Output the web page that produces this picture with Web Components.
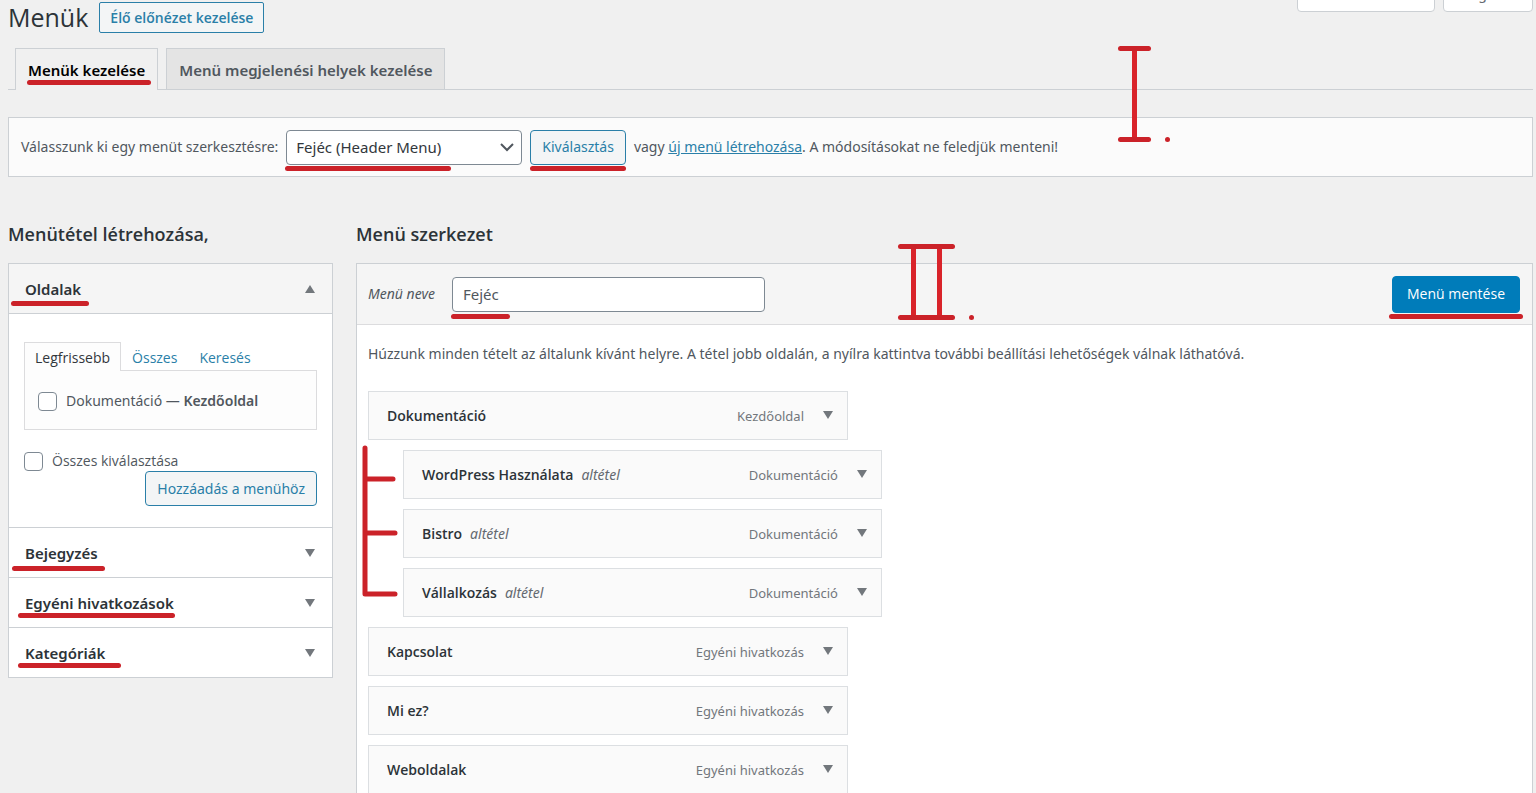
<!DOCTYPE html>
<html lang="hu">
<head>
<meta charset="utf-8">
<meta name="viewport" content="width=device-width, initial-scale=1">
<title>Menük</title>
<style>
  html, body { margin: 0; height: 100%; }
  body { overflow: hidden; background: #f0f0f0; color: #50575e;
    font: 14px/20px "Noto Sans", "Open Sans", sans-serif;
    --compact: "Open Sans", "Noto Sans", sans-serif;
    --line: #ccd0d4; --blue: #2a7fa8; --ink: #cb2229; --dark: #2c3338; }
</style>
</head>
<body>
<menus-page></menus-page>

<script>
const define = (name, html, setup) => {
  const template = document.createElement('template');
  template.innerHTML = '<style>*{box-sizing:border-box}</style>' + html;
  customElements.define(name, class extends HTMLElement {
    constructor() {
      super();
      this.attachShadow({ mode: 'open' }).append(template.content.cloneNode(true));
    }
    connectedCallback() { if (setup) setup(this, this.shadowRoot); }
  });
};

/* Red marker stroke laid under the thing that holds it */
define('ink-line', `
  <style>:host { position: absolute; left: var(--from, 0px); right: var(--to, 0px); top: var(--at, 100%);
    height: 5px; border-radius: 3px; background: var(--ink); pointer-events: none; }</style>`);

/* Marker numeral: bars above and below, one stem for each count, and a dot */
define('ink-numeral', `
  <style>
    :host { position: absolute; display: flex; align-items: flex-end; gap: 14px; pointer-events: none; z-index: 2; }
    .body { display: flex; justify-content: center; gap: 21px; height: var(--tall); width: var(--wide);
      position: relative; }
    .body::before, .body::after { content: ""; position: absolute; left: 0; right: 0; height: 5px;
      border-radius: 3px; background: var(--ink); }
    .body::before { top: 0; } .body::after { bottom: 0; }
    i { width: 5px; background: #d9232a; }
    b { width: 5px; height: 5px; border-radius: 50%; background: var(--ink); }
  </style><div class="body"></div><b></b>`,
  (host, root) => {
    root.querySelector('.body').innerHTML = '<i></i>'.repeat(Number(host.getAttribute('count')));
  });

/* Marker bracket that joins the sub-items */
define('ink-bracket', `
  <style>
    :host { position: absolute; left: -6px; top: -5px; pointer-events: none; }
    svg { display: block; stroke: var(--ink); stroke-width: 5; fill: none; stroke-linecap: round; stroke-linejoin: round; }
  </style>
  <svg width="38" height="154"><path d="M3 3V149H33M3 34H31M3 88H33"/></svg>`);

define('wp-button', `
  <style>
    :host { display: block; position: relative; }
    button { display: block; width: 100%; font: inherit; color: var(--blue); background: #f3f5f6; border: 1px solid var(--blue);
      border-radius: 4px; height: 35px; padding: 0 11px; white-space: nowrap; }
    :host([kind=title]) button { height: 31px; padding: 0 10px; border-radius: 2px; font-family: var(--compact); font-weight: 600; }
    :host([kind=primary]) button { background: #007cba; border-color: #007cba; color: #fff; height: 37px; padding: 0 14px; font-family: var(--compact); }
  </style><button type="button"><slot></slot></button><slot name="ink"></slot>`);

define('screen-links', `
  <style>
    :host { position: absolute; top: -24px; right: 3px; display: flex; gap: 8px; }
    button { height: 36px; border: 1px solid var(--line); border-radius: 0 0 4px 4px; background: #fff;
      font: inherit; color: #646970; text-align: left; padding: 0 18px; }
    .options { width: 138px; } .help { width: 90px; line-height: 34px; }
  </style>
  <button type="button" class="options" aria-label="Beállítások"></button>
  <button type="button" class="help">Súgó</button>`);

define('page-tabs', `
  <style>
    :host { display: block; }
    nav { display: flex; gap: 8px; padding-left: 7px; border-bottom: 1px solid var(--line); height: 42px; }
    a { position: relative; height: 41px; border: 1px solid var(--line); border-bottom: 0; background: #e4e4e4;
      color: #50575e; font-size: 15px; font-weight: 600; line-height: 42px; padding: 0 12px; text-decoration: none; white-space: nowrap; }
    a.on { height: 42px; background: #f0f0f0; color: #000; }
  </style>
  <nav><a class="on" href="#manage">Menük kezelése<ink-line style="--from:11px;--to:6px;--at:31px"></ink-line></a>
  <a href="#locations">Menü megjelenési helyek kezelése</a></nav>`);

define('menu-picker', `
  <style>
    :host { display: block; }
    form { display: flex; align-items: center; height: 60px; padding: 0 12px; background: #fbfbfb;
      border: 1px solid var(--line); white-space: nowrap; }
    .pick { position: relative; margin: 0 8px; width: 236px; }
    select { appearance: none; display: block; width: 100%; height: 35px; border: 1px solid #7e8993; border-radius: 4px;
      background: #fff; color: #32373c; font: inherit; font-size: 15px; padding: 0 9px; }
    svg { position: absolute; right: 8px; top: 10px; pointer-events: none; }
    p { margin: 0 0 0 8px; }
    a { color: var(--blue); }
  </style>
  <form>
    <label for="menu">Válasszunk ki egy menüt szerkesztésre:</label>
    <span class="pick"><select id="menu"><option>Fejéc (Header Menu)</option></select>
      <svg width="14" height="14" viewBox="0 0 14 14"><path d="M1 4l6 6 6-6" fill="none" stroke="#50575e" stroke-width="2"/></svg>
      <ink-line style="--from:-1px;--to:71px;--at:36px"></ink-line></span>
    <wp-button>Kiválasztás<ink-line slot="ink" style="--at:36px"></ink-line></wp-button>
    <p>vagy <a href="#new">új menü létrehozása</a>. A módosításokat ne feledjük menteni!</p>
  </form>`);

/* One section of the accordion */
define('acc-section', `
  <style>
    :host { display: block; }
    h3 { margin: 0; }
    button { display: flex; justify-content: space-between; align-items: center; width: 100%; height: 49px; border: 0;
      background: #fff; padding: 0 17px 0 16px; font: inherit; font-size: 15px; font-weight: 600; color: var(--dark); text-align: left; }
    :host([open]) button { background: #f5f5f5; }
    .arrow { width: 0; border: 5px solid transparent; border-top: 8px solid #72777c; border-bottom: 0; }
    :host([open]) .arrow { border-top: 0; border-bottom: 8px solid #72777c; }
    .content { display: none; }
    :host([open]) .content { display: block; padding: 28px 15px 21px; border-top: 1px solid var(--line); }
    .head { position: relative; }
  </style>
  <h3 class="head"><button type="button"><span class="label"></span><span class="arrow"></span></button><slot name="ink"></slot></h3>
  <div class="content"><slot></slot></div>`,
  (host, root) => {
    root.querySelector('.label').textContent = host.getAttribute('label');
    root.querySelector('button').setAttribute('aria-expanded', host.hasAttribute('open'));
  });

define('page-chooser', `
  <style>
    :host { display: block; }
    nav { display: flex; height: 29px; margin-bottom: -1px; position: relative; line-height: 32px; font-family: var(--compact); }
    a { padding: 0 11px; color: var(--blue); text-decoration: none; }
    a.on { border: 1px solid #dcdcde; border-bottom: 0; background: #fdfdfd; color: #32373c; padding: 0 10px; line-height: 30px; }
    .list { border: 1px solid #dcdcde; background: #fdfdfd; padding: 20px 13px 18px; }
    label { display: flex; align-items: center; gap: 9px; height: 20px; white-space: pre; }
    input { appearance: none; width: 19px; height: 19px; margin: 0; border: 1px solid #7e8993; border-radius: 4px; background: #fff; }
    .all { margin-top: 21px; font-family: var(--compact); }
    .actions { display: flex; justify-content: flex-end; }
    b { font-weight: 600; }
  </style>
  <nav><a class="on" href="#recent">Legfrissebb</a><a href="#all">Összes</a><a href="#search">Keresés</a></nav>
  <div class="list"><label><input type="checkbox"><span>Dokumentáció — <b>Kezdőoldal</b></span></label></div>
  <label class="all"><input type="checkbox"><span>Összes kiválasztása</span></label>
  <div class="actions"><wp-button>Hozzáadás a menühöz</wp-button></div>`);

define('item-accordion', `
  <style>
    :host { display: block; border: 1px solid var(--line); background: #fff; }
    acc-section + acc-section { border-top: 1px solid var(--line); }
  </style>
  <acc-section label="Oldalak" open><page-chooser></page-chooser>
    <ink-line slot="ink" style="--from:2px;--to:243px;--at:37px"></ink-line></acc-section>
  <acc-section label="Bejegyzés"><ink-line slot="ink" style="--from:3px;--to:227px;--at:38px"></ink-line></acc-section>
  <acc-section label="Egyéni hivatkozások"><ink-line slot="ink" style="--from:9px;--to:157px;--at:35px"></ink-line></acc-section>
  <acc-section label="Kategóriák"><ink-line slot="ink" style="--from:9px;--to:211px;--at:35px"></ink-line></acc-section>`);

define('menu-item', `
  <style>
    :host { display: flex; align-items: center; width: 480px; height: 49px; border: 1px solid #dcdfe2; background: #fafafa;
      padding: 0 13px 0 18px; white-space: pre; }
    :host([sub]) { margin-left: 35px; width: 479px; }
    strong { font-weight: 600; color: var(--dark); font-family: var(--compact); }
    em { margin-left: 8px; color: #646970; }
    .kind { margin-left: auto; color: #72777c; font-size: 13px; }
    button { border: 0; background: none; padding: 0; margin-left: 18px; display: flex; }
    svg { display: block; }
  </style>
  <strong><slot></slot></strong><em></em><span class="kind"></span>
  <button type="button" aria-label="Szerkesztés"><svg width="12" height="10"><path d="M1 0h10L6 8z" fill="#72777c"/></svg></button>`,
  (host, root) => {
    root.querySelector('em').textContent = host.hasAttribute('sub') ? 'altétel' : '';
    root.querySelector('.kind').textContent = host.getAttribute('kind');
  });

define('menu-structure', `
  <style>
    :host { display: block; border: 1px solid var(--line); background: #fff; }
    header { position: relative; display: flex; align-items: center; height: 61px; padding: 0 12px 0 11px; background: #f5f5f5; border-bottom: 1px solid #dcdcde; }
    label { font-style: italic; }
    .field { position: relative; width: 313px; margin: 0 auto 0 17px; }
    input { display: block; width: 100%; height: 35px; border: 1px solid #7e8993; border-radius: 4px; background: #fff;
      font: inherit; font-size: 15px; color: #50575e; padding: 0 10px; }
    ink-numeral { left: 541px; top: -20px; }
    p { margin: 0; padding: 19px 11px 27px; }
    .items { display: flex; flex-direction: column; gap: 10px; padding: 0 11px; }
    .subs { position: relative; display: flex; flex-direction: column; gap: 10px; }
  </style>
  <header>
    <label for="name">Menü neve</label>
    <span class="field"><input id="name" type="text" value="Fejéc"><ink-line style="--from:-1px;--to:255px;--at:37px"></ink-line></span>
    <wp-button kind="primary">Menü mentése<ink-line slot="ink" style="--from:-3px;--to:-3px;--at:38px"></ink-line></wp-button>
    <ink-numeral count="2" role="img" aria-label="II." style="--wide:57px;--tall:76px"></ink-numeral>
  </header>
  <p>Húzzunk minden tételt az általunk kívánt helyre. A tétel jobb oldalán, a nyílra kattintva további beállítási lehetőségek válnak láthatóvá.</p>
  <div class="items">
    <menu-item kind="Kezdőoldal">Dokumentáció</menu-item>
    <div class="subs">
      <menu-item sub kind="Dokumentáció">WordPress Használata</menu-item>
      <menu-item sub kind="Dokumentáció">Bistro</menu-item>
      <menu-item sub kind="Dokumentáció">Vállalkozás</menu-item>
      <ink-bracket></ink-bracket>
    </div>
    <menu-item kind="Egyéni hivatkozás">Kapcsolat</menu-item>
    <menu-item kind="Egyéni hivatkozás">Mi ez?</menu-item>
    <menu-item kind="Egyéni hivatkozás">Weboldalak</menu-item>
  </div>`);

define('menus-page', `
  <style>
    :host { display: block; position: relative; padding: 2px 3px 0 8px; }
    .title { display: flex; align-items: center; gap: 11px; height: 31px; margin-bottom: 15px; }
    h1 { margin: 0; font: 400 25px/31px var(--compact); color: var(--dark); }
    menu-picker { margin: 27px 0 45px; }
    .columns { display: grid; grid-template-columns: 325px minmax(0, 1fr); column-gap: 23px; }
    h2 { margin: 0 0 17px; font: 600 18px/24px var(--compact); color: var(--dark); white-space: nowrap; }
    .numeral { right: 366px; top: 46px; }
  </style>
  <screen-links></screen-links>
  <div class="title"><h1>Menük</h1><wp-button kind="title">Élő előnézet kezelése</wp-button></div>
  <page-tabs></page-tabs>
  <menu-picker></menu-picker>
  <div class="columns">
    <section><h2>Menütétel létrehozása,</h2><item-accordion></item-accordion></section>
    <section><h2>Menü szerkezet</h2><menu-structure></menu-structure></section>
  </div>
  <ink-numeral class="numeral" count="1" role="img" aria-label="I." style="--wide:33px;--tall:96px"></ink-numeral>`);
</script>
</body>
</html>
